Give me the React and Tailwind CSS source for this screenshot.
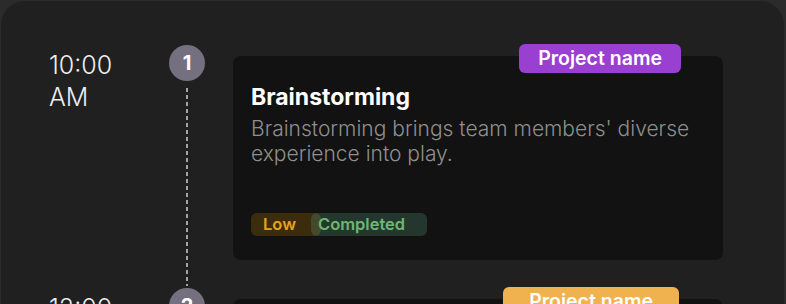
const items = [
  {
    time: '10:00 AM',
    n: 1,
    project: 'Project name',
    badge: 'bg-[#9a40d0] text-white px-[19px] right-[42px]',
    title: 'Brainstorming',
    desc: "Brainstorming brings team members' diverse experience into play.",
  },
  {
    time: '12:00 PM',
    n: 2,
    project: 'Project name',
    badge: 'bg-[#f0b24e] text-white px-[26px] right-[44px]',
    title: 'Research',
    desc: 'Research helps the team understand the users and their needs.',
  },
];

const Row = ({ item }) => (
  <div className="flex">
    <div className="w-[168px] shrink-0 pl-[48px] pt-[5px] pr-[30px] text-[25px] leading-[32px] font-light text-[#ededed]">
      {item.time}
    </div>
    <div className="w-[36px] shrink-0 flex flex-col items-center pt-[1px]">
      <div className="w-[36px] h-[36px] rounded-full bg-[#75707f] flex items-center justify-center text-white font-bold text-[20px]">
        {item.n}
      </div>
      <div className="flex-1 w-[2px] mt-[7px] mb-[1px] bg-[repeating-linear-gradient(to_bottom,#a3a3a3_0_4px,transparent_4px_7px)]" />
    </div>
    <div className="relative ml-[28px] w-[490px] shrink-0 pt-[12px] pb-[27px]">
      <div className={`absolute top-0 h-[29px] rounded-[6px] flex items-center text-[19.5px] font-semibold ${item.badge}`}>
        {item.project}
      </div>
      <div className="h-[204px] rounded-[8px] bg-[#121212] px-[18px] pt-[26px]">
        <div className="text-[23px] leading-[30px] font-bold text-white">{item.title}</div>
        <div className="mt-[4px] w-[440px] text-[21px] leading-[25px] font-light text-[#8f8f8f]">{item.desc}</div>
        <div className="mt-[47px] flex text-[16.5px] font-semibold leading-[23px]">
          <span className="h-[23px] rounded-[6px] bg-[#3b2c0e] text-[#e8a21c] pl-[12px] pr-[25px]">Low</span>
          <span className="h-[23px] -ml-[10px] rounded-[6px] bg-[rgba(90,166,134,0.25)] text-[#6db86f] pl-[7px] pr-[22px]">Completed</span>
        </div>
      </div>
    </div>
  </div>
);

export default function App() {
  return (
    <div className="w-[786px] h-[304px] overflow-hidden bg-[#2b2b2b] pt-[1px] pl-[1px] pr-[2px] font-['Inter',sans-serif]">
      <div className="h-[320px] rounded-t-[24px] bg-[#202020] pt-[43px]">
        {items.map(item => (
          <Row key={item.n} item={item} />
        ))}
      </div>
    </div>
  );
}
